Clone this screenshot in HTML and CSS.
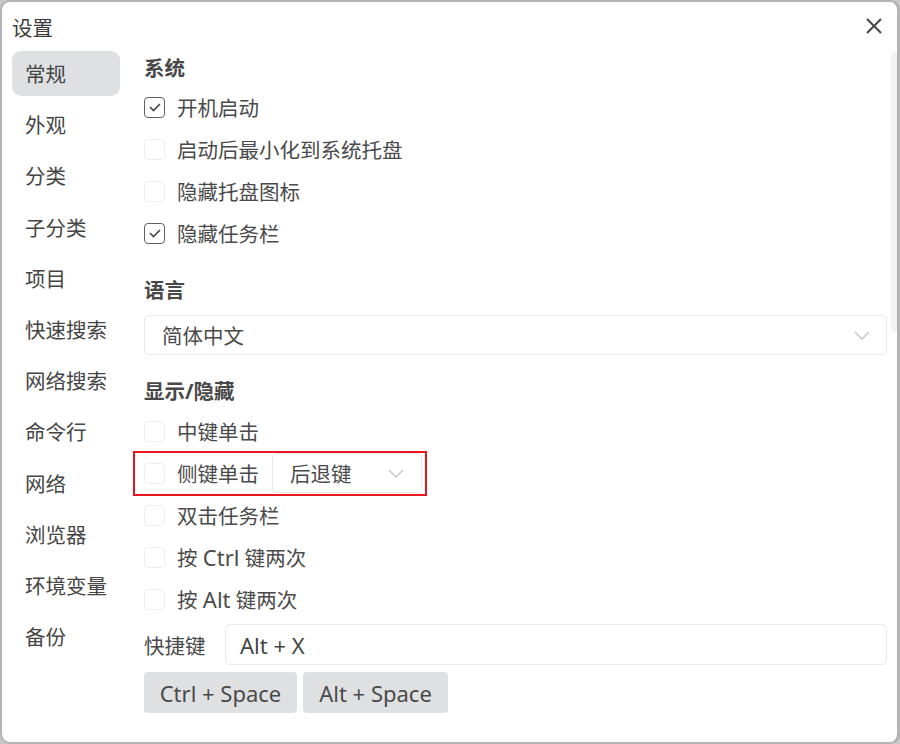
FILE: index.html
```html
<!DOCTYPE html>
<html lang="zh-CN">
<head>
<meta charset="utf-8">
<title>设置</title>
<link rel="stylesheet" href="styles.css">
</head>
<body>
<div class="window">
  <div class="titlebar">
    <span class="title">设置</span>
    <svg class="close" width="16" height="16" viewBox="0 0 16 16"><path d="M1 1 L15 15 M15 1 L1 15" stroke="#454545" stroke-width="2" fill="none"/></svg>
  </div>
  <div class="main">
    <nav class="sidebar">
      <div class="nav-item active">常规</div>
      <div class="nav-item">外观</div>
      <div class="nav-item">分类</div>
      <div class="nav-item">子分类</div>
      <div class="nav-item">项目</div>
      <div class="nav-item">快速搜索</div>
      <div class="nav-item">网络搜索</div>
      <div class="nav-item">命令行</div>
      <div class="nav-item">网络</div>
      <div class="nav-item">浏览器</div>
      <div class="nav-item">环境变量</div>
      <div class="nav-item">备份</div>
    </nav>
    <section class="content">
      <h2 class="heading first">系统</h2>
      <label class="row"><span class="box checked"><svg width="14" height="12" viewBox="0 0 14 12"><path d="M2 6 L5.5 9.5 L12 3" stroke="#444" stroke-width="1.6" fill="none"/></svg></span>开机启动</label>
      <label class="row"><span class="box"></span>启动后最小化到系统托盘</label>
      <label class="row"><span class="box"></span>隐藏托盘图标</label>
      <label class="row"><span class="box checked"><svg width="14" height="12" viewBox="0 0 14 12"><path d="M2 6 L5.5 9.5 L12 3" stroke="#444" stroke-width="1.6" fill="none"/></svg></span>隐藏任务栏</label>

      <h2 class="heading">语言</h2>
      <div class="select wide">
        <span>简体中文</span>
        <svg class="chev" width="16" height="9" viewBox="0 0 16 9"><path d="M1 1 L8 8 L15 1" stroke="#c4c4c4" stroke-width="1.3" fill="none"/></svg>
      </div>

      <h2 class="heading">显示/隐藏</h2>
      <label class="row"><span class="box"></span>中键单击</label>
      <div class="row marked">
        <span class="box"></span>侧键单击
        <div class="select small">
          <span>后退键</span>
          <svg class="chev" width="16" height="9" viewBox="0 0 16 9"><path d="M1 1 L8 8 L15 1" stroke="#c4c4c4" stroke-width="1.3" fill="none"/></svg>
        </div>
        <div class="highlight"></div>
      </div>
      <label class="row"><span class="box"></span>双击任务栏</label>
      <label class="row"><span class="box"></span>按&nbsp;<span class="lat">Ctrl</span>&nbsp;键两次</label>
      <label class="row"><span class="box"></span>按&nbsp;<span class="lat">Alt</span>&nbsp;键两次</label>

      <div class="shortcut">
        <span class="label">快捷键</span>
        <div class="input"><span class="lat">Alt + X</span></div>
      </div>
      <div class="buttons">
        <button class="btn b1">Ctrl + Space</button>
        <button class="btn b2">Alt + Space</button>
      </div>
    </section>
    <div class="scrollbar"><div class="thumb"></div></div>
  </div>
</div>
</body>
</html>
```

FILE: styles.css
```css
* { box-sizing: border-box; }
html, body { margin: 0; padding: 0; }
body {
  width: 900px;
  height: 744px;
  background: #c9c9c9;
  font-family: "Noto Sans", "Noto Sans CJK SC", sans-serif;
  color: #4a4a4a;
  overflow: hidden;
}
.window {
  width: 900px;
  height: 744px;
  background: #fff;
  border: 2px solid #b3b3b3;
  border-right-width: 3px;
  border-radius: 10px;
  display: flex;
  flex-direction: column;
}
.titlebar {
  height: 49px;
  display: flex;
  align-items: center;
  justify-content: space-between;
  padding: 0 15px 0 10px;
  flex: none;
}
.title {
  font-size: 20.5px;
  line-height: 28px;
  color: #3c3c3c;
  margin-top: 2px;
}
.close { display: block; margin-top: -2px; }
.main {
  flex: 1;
  display: flex;
  padding-left: 10px;
}
.sidebar {
  width: 108px;
  flex: none;
  display: flex;
  flex-direction: column;
  gap: 6.2px;
}
.nav-item {
  height: 45px;
  line-height: 45px;
  padding: 1px 0 0 13px;
  font-size: 20.5px;
  border-radius: 9px;
  color: #454545;
}
.nav-item.active { background: #dfe0e2; }
.content {
  width: 743px;
  margin-left: 24px;
  flex: none;
  display: flex;
  flex-direction: column;
}
.heading {
  margin: 19px 0 2px;
  height: 34px;
  line-height: 34px;
  font-size: 20.5px;
  font-weight: 700;
  color: #484848;
}
.heading.first { margin-top: 0; margin-bottom: 1px; }
.row {
  position: relative;
  height: 42px;
  display: flex;
  align-items: center;
  font-size: 20.5px;
  color: #4a4a4a;
}
.lat { font-size: 22px; }
.box {
  width: 21px;
  height: 21px;
  border: 1px solid #eeeeee;
  border-radius: 4px;
  margin-right: 12px;
  display: flex;
  align-items: center;
  justify-content: center;
  flex: none;
}
.box.checked { border: 1.5px solid #606060; }
.select {
  height: 40px;
  border: 1px solid #e9e9e9;
  border-radius: 5px;
  display: flex;
  align-items: center;
  justify-content: space-between;
  font-size: 20.5px;
  color: #4a4a4a;
}
.select.wide { margin-top: 6px; padding: 0 16px 0 17px; }
.select.small { width: 150px; margin-left: 13px; padding: 0 17px 0 17px; }
.chev { display: block; }
.highlight {
  position: absolute;
  left: -11px;
  top: -1px;
  width: 294px;
  height: 45px;
  border: 2px solid #e8171f;
}
.shortcut {
  margin-top: 4px;
  display: flex;
  align-items: center;
  gap: 18px;
}
.label { font-size: 20.5px; width: 63px; white-space: nowrap; }
.input {
  flex: 1;
  height: 41px;
  border: 1px solid #e9e9e9;
  border-radius: 5px;
  padding-left: 14px;
  display: flex;
  align-items: center;
  color: #454545;
}
.buttons {
  margin-top: 7px;
  display: flex;
  gap: 6px;
}
.btn {
  height: 41px;
  border: none;
  border-radius: 4px;
  background: #dfe0e2;
  font-family: "Noto Sans", "Noto Sans CJK SC", sans-serif;
  font-size: 22px;
  color: #4a4a4a;
  padding: 0;
}
.b1 { width: 153px; }
.b2 { width: 145px; }
.scrollbar {
  width: 6px;
  margin-left: 4px;
  flex: none;
}
.thumb {
  margin-top: 1px;
  height: 280px;
  background: #f2f3f3;
  border-radius: 4px;
}
```
